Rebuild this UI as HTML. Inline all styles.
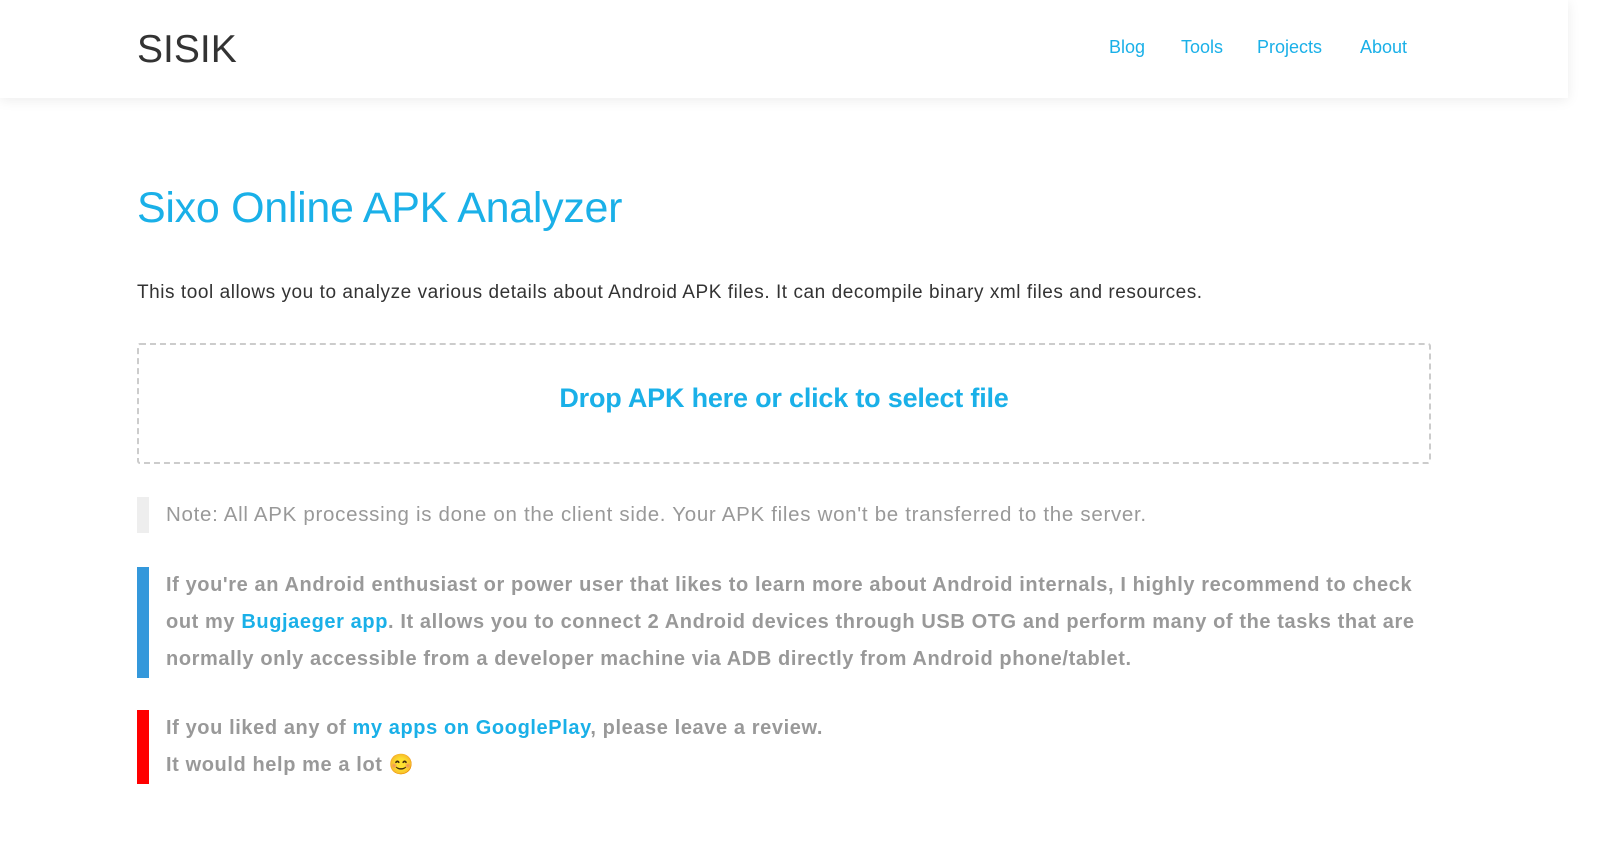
<!DOCTYPE html>
<html><head><meta charset="utf-8"><style>
html,body{margin:0;padding:0;background:#fff;overflow:hidden}
body{width:1568px;height:865px;font-family:"Liberation Sans",sans-serif;position:relative}
.hdr{position:absolute;left:0;top:0;width:1568px;height:98px;background:#fff;box-shadow:0 2px 12px rgba(0,0,0,.08)}
.logo{position:absolute;left:137px;top:28px;font-size:39px;color:#333;font-weight:300;letter-spacing:0px}
.nav{position:absolute;top:37px;font-size:18px;color:#1ab0e8}
h1{position:absolute;left:137px;top:184px;margin:0;font-size:43px;font-weight:normal;color:#1ab0e8;letter-spacing:-.3px}
.intro{position:absolute;left:137px;top:282px;font-size:19px;color:#333;letter-spacing:.55px}
.drop{position:absolute;left:137px;top:343px;width:1290px;height:117px;border:2px dashed #ccc;border-radius:3px}
.drop span{position:absolute;left:0;right:0;top:38px;text-align:center;font-size:27px;color:#1ab0e8;font-weight:bold;letter-spacing:-.2px}
.bq{position:absolute;left:137px;border-left:12px solid;padding-left:17px;color:#999;font-size:21px}
a{color:#1ab0e8;text-decoration:none}
</style></head><body>
<div class="hdr">
<div class="logo">SISIK</div>
<span class="nav" style="left:1109px">Blog</span>
<span class="nav" style="left:1181px">Tools</span>
<span class="nav" style="left:1257px">Projects</span>
<span class="nav" style="left:1360px">About</span>
</div>
<h1>Sixo Online APK Analyzer</h1>
<div class="intro">This tool allows you to analyze various details about Android APK files. It can decompile binary xml files and resources.</div>
<div class="drop"><span>Drop APK here or click to select file</span></div>
<div class="bq" style="top:497px;height:36px;line-height:36px;border-color:#eee;font-size:20.5px;letter-spacing:.7px">Note: All APK processing is done on the client side. Your APK files won't be transferred to the server.</div>
<div class="bq" style="top:567px;width:1262px;line-height:37px;border-color:#3498db;font-weight:bold;font-size:20px;letter-spacing:.6px">If you're an Android enthusiast or power user that likes to learn more about Android internals, I highly recommend to check out my <a>Bugjaeger app</a>. It allows you to connect 2 Android devices through USB OTG and perform many of the tasks that are normally only accessible from a developer machine via ADB directly from Android phone/tablet.</div>
<div class="bq" style="top:711px;line-height:37px;border-color:#f00;font-weight:bold;font-size:20px;letter-spacing:.6px;margin-top:-1px">If you liked any of <a>my apps on GooglePlay</a>, please leave a review.<br>It would help me a lot 😊</div>
</body></html>
